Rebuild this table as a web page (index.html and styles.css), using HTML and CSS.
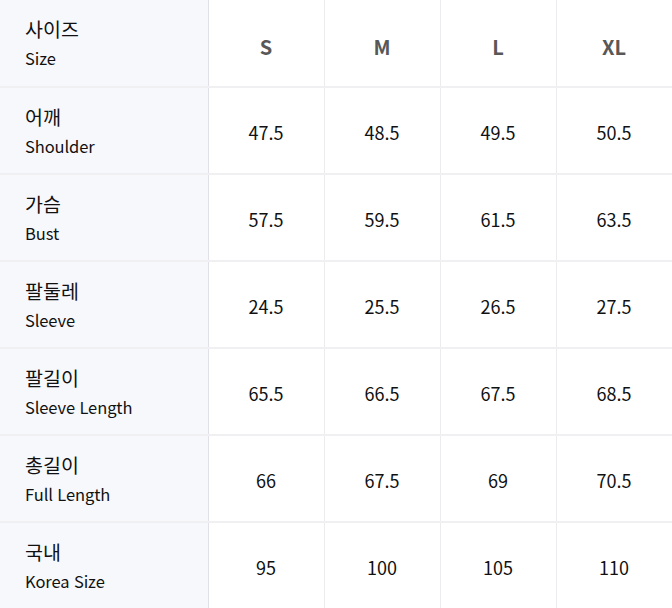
FILE: index.html
```html
<!DOCTYPE html>
<html lang="ko">
<head>
<meta charset="utf-8">
<link rel="stylesheet" href="styles.css">
</head>
<body>
<table class="size-table">
  <colgroup>
    <col class="col-label"><col class="col-size"><col class="col-size"><col class="col-size"><col class="col-size">
  </colgroup>
  <thead>
    <tr>
      <th class="label"><span class="ko">사이즈</span><span class="en">Size</span></th>
      <th class="head">S</th><th class="head">M</th><th class="head">L</th><th class="head">XL</th>
    </tr>
  </thead>
  <tbody>
    <tr>
      <th class="label"><span class="ko">어깨</span><span class="en">Shoulder</span></th>
      <td>47.5</td><td>48.5</td><td>49.5</td><td>50.5</td>
    </tr>
    <tr>
      <th class="label"><span class="ko">가슴</span><span class="en">Bust</span></th>
      <td>57.5</td><td>59.5</td><td>61.5</td><td>63.5</td>
    </tr>
    <tr>
      <th class="label"><span class="ko">팔둘레</span><span class="en">Sleeve</span></th>
      <td>24.5</td><td>25.5</td><td>26.5</td><td>27.5</td>
    </tr>
    <tr>
      <th class="label"><span class="ko">팔길이</span><span class="en">Sleeve Length</span></th>
      <td>65.5</td><td>66.5</td><td>67.5</td><td>68.5</td>
    </tr>
    <tr>
      <th class="label"><span class="ko">총길이</span><span class="en">Full Length</span></th>
      <td>66</td><td>67.5</td><td>69</td><td>70.5</td>
    </tr>
    <tr>
      <th class="label"><span class="ko">국내</span><span class="en">Korea Size</span></th>
      <td>95</td><td>100</td><td>105</td><td>110</td>
    </tr>
  </tbody>
</table>
</body>
</html>
```
FILE: styles.css
```css
html, body {
  margin: 0;
  padding: 0;
  background: #ffffff;
}
body {
  font-family: "Noto Sans CJK KR", "Noto Sans", sans-serif;
  color: #111111;
}
.size-table {
  width: 672px;
  border-collapse: collapse;
  table-layout: fixed;
}
.col-label { width: 208px; }
.col-size { width: 116px; }
.size-table tr {
  height: 87px;
}
.size-table th,
.size-table td {
  padding: 0;
  border-bottom: 2px solid #f0f0f2;
  border-right: 1px solid #ececee;
  vertical-align: middle;
}
.label {
  background: #f7f8fc;
  text-align: left;
  padding-left: 25px !important;
  font-weight: 400;
  border-right: 1px solid #dfe1e6 !important;
}
.ko {
  display: block;
  font-size: 19.5px;
  font-weight: 400;
  line-height: 28px;
  color: #111111;
}
.en {
  display: block;
  font-size: 16.5px;
  font-weight: 400;
  line-height: 26px;
  margin-top: 2px;
  letter-spacing: -0.1px;
  color: #111111;
}
.head {
  font-size: 20px;
  font-weight: 700;
  color: #585858;
  text-align: center;
  padding-top: 6px !important;
}
.size-table td {
  font-size: 18px;
  font-weight: 400;
  text-align: center;
  color: #111111;
  padding-top: 2px;
}
```
